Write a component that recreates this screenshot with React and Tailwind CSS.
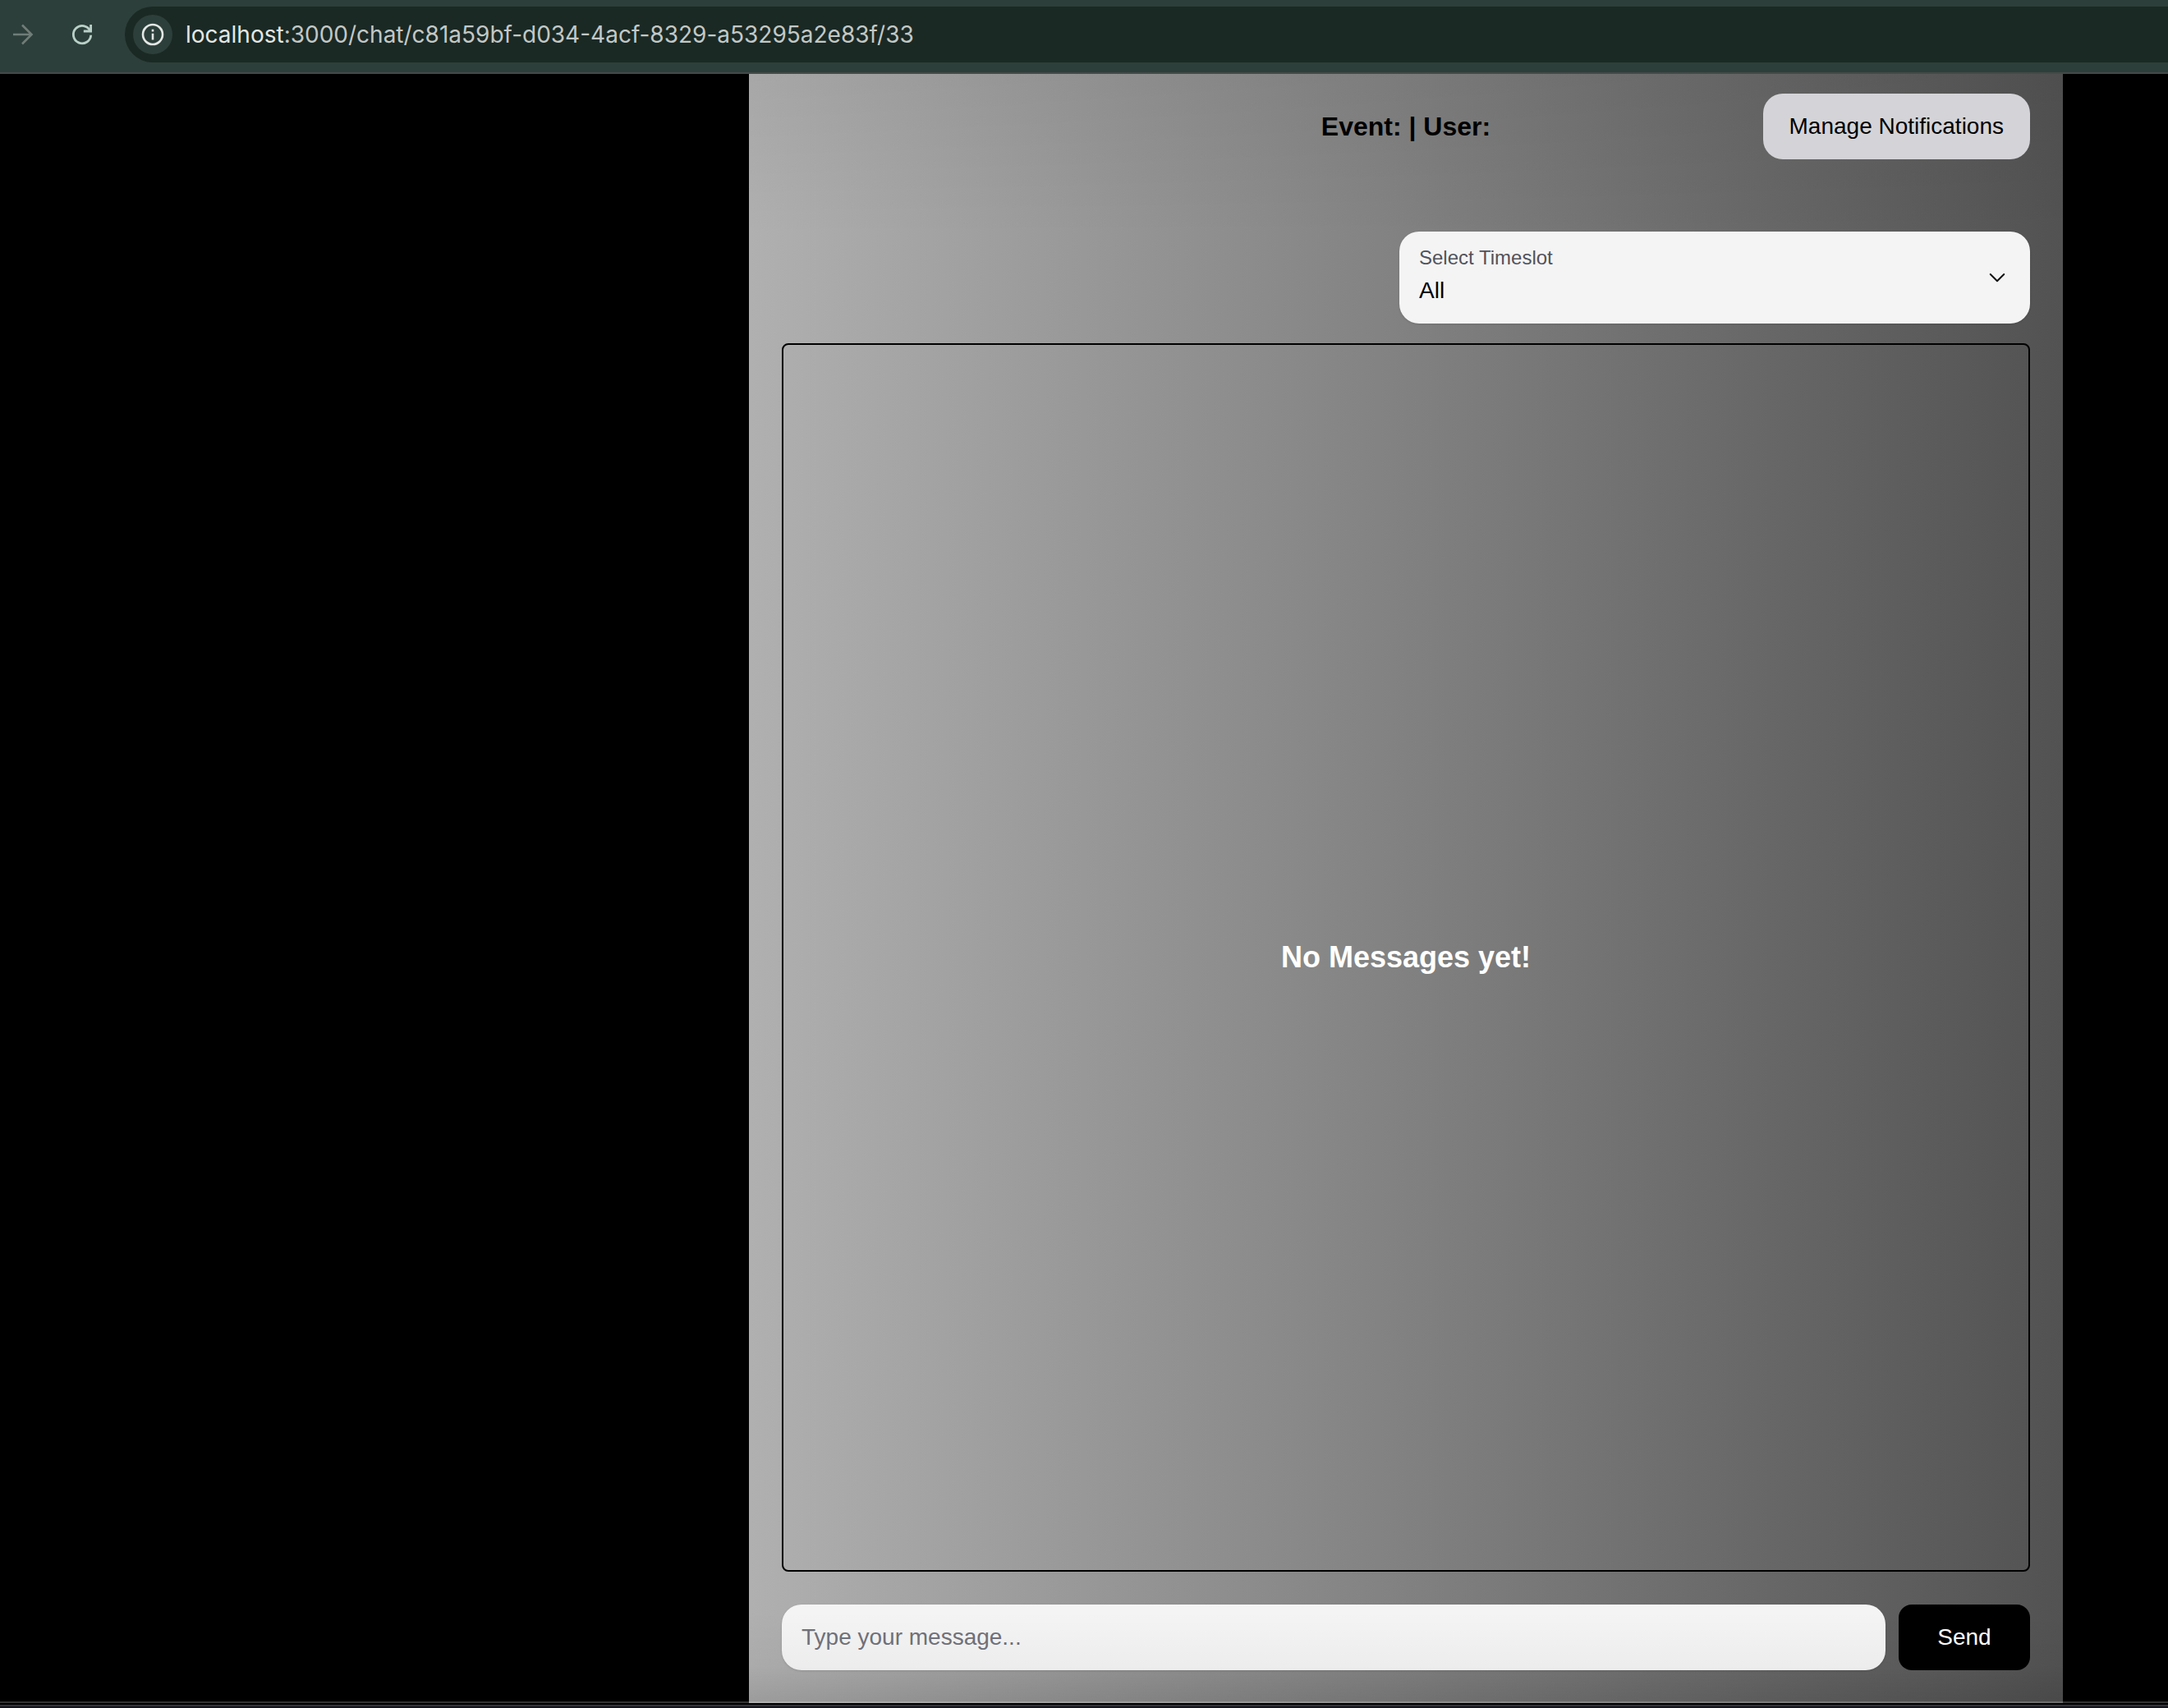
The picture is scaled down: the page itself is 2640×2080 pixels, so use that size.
import React from "react";

const ADDRESS_HOST = "localhost";
const ADDRESS_PATH = ":3000/chat/c81a59bf-d034-4acf-8329-a53295a2e83f/33";

function BrowserBar() {
  return (
    <header className="flex h-[90px] items-center overflow-hidden border-b-2 border-[#444a48] bg-[#2d3f3a] pb-1 font-['Inter',sans-serif]">
      <button type="button" aria-label="Forward" className="ml-3 text-[#6f7d78]">
        <svg width="32" height="32" viewBox="0 0 32 32" fill="none" stroke="currentColor" strokeWidth="2.6">
          <path d="M4 16H26.500M15 4.500L26.500 16L15 27.500" />
        </svg>
      </button>
      <button type="button" aria-label="Reload" className="ml-10 text-[#b9d0c8]">
        <svg width="32" height="32" viewBox="0 0 32 32" fill="none" stroke="currentColor" strokeWidth="2.8">
          <path d="M26.700 16.700A10.700 10.700 0 1 1 25.800 11.800" />
          <path d="M26.600 4V12H17.800" />
        </svg>
      </button>
      <div className="ml-9 flex h-[68px] flex-1 items-center rounded-l-full bg-[#1a2924] pl-[10px]">
        <button type="button" aria-label="Site information" className="flex size-12 items-center justify-center rounded-full bg-[#2d3f3a] text-[#e3e7e5]">
          <svg width="28" height="28" viewBox="0 0 28 28" fill="none" stroke="currentColor" strokeWidth="2.6">
            <circle cx="14" cy="14" r="12" />
            <path d="M14 12.700V20.500M14 7.800V10.600" />
          </svg>
        </button>
        <div className="relative ml-4 flex-1 text-[28px] leading-9 whitespace-nowrap">
          <span aria-hidden="true" className="text-[#c3c8c6]">
            <span className="text-[#e3e7e5]">{ADDRESS_HOST}</span>
            {ADDRESS_PATH}
          </span>
          <input
            aria-label="Address"
            className="absolute inset-0 w-full bg-transparent text-transparent outline-none"
            defaultValue={ADDRESS_HOST + ADDRESS_PATH}
          />
        </div>
      </div>
    </header>
  );
}

function TimeslotSelect() {
  return (
    <div className="relative w-full max-w-3xl">
      <label htmlFor="timeslot" className="pointer-events-none absolute top-4 left-6 text-2xl text-[#52525b]">
        Select Timeslot
      </label>
      <select
        id="timeslot"
        className="block h-28 w-full appearance-none rounded-3xl bg-[#f4f4f4] px-6 pt-8 text-[28px] text-black shadow-sm"
      >
        <option>All</option>
      </select>
      <svg className="pointer-events-none absolute top-10 right-6" width="32" height="32" viewBox="0 0 24 24" fill="none" stroke="#111" strokeWidth="1.5" strokeLinecap="round" strokeLinejoin="round">
        <path d="m5.800 9 6.200 6.200 6.200-6.200" />
      </svg>
    </div>
  );
}

export default function App() {
  return (
    <div className="flex min-h-screen flex-col bg-black font-['Liberation_Sans',Arial,sans-serif]">
      <BrowserBar />
      <main className="relative mr-32 ml-[912px] flex flex-1 flex-col bg-[linear-gradient(to_bottom,rgba(0,0,0,0.05),transparent_200px),linear-gradient(to_right,#b0b0b0,#525252)] px-10 pt-6 pb-10">
        <div className="grid grid-cols-[1fr_auto_1fr] items-center">
          <h1 className="col-start-2 text-[32px] leading-10 font-bold text-black">Event: | User:</h1>
          <button type="button" className="h-20 justify-self-end rounded-3xl bg-[#d4d4d8] px-8 text-[28px] text-black">
            Manage Notifications
          </button>
        </div>
        <div className="mt-22 flex justify-end">
          <TimeslotSelect />
        </div>
        <section className="mt-6 flex flex-1 items-center justify-center rounded-lg border-2 border-black">
          <p className="text-4xl font-bold text-white">No Messages yet!</p>
        </section>
        <form className="mt-10 flex gap-4" onSubmit={(e) => e.preventDefault()}>
          <input
            aria-label="Message"
            placeholder="Type your message..."
            className="h-20 min-w-0 flex-1 rounded-3xl bg-[#f4f4f4] px-6 text-[28px] text-black shadow-sm placeholder:text-[#71717a]"
          />
          <button type="submit" className="h-20 w-40 rounded-2xl bg-black text-[28px] text-white">
            Send
          </button>
        </form>
        <div className="pointer-events-none absolute inset-x-0 bottom-0 h-28 bg-linear-to-b from-transparent via-black/3 via-60% to-black/12" />
      </main>
      <footer className="relative -mt-0.5 h-2 border-t-2 border-white/20 bg-black bg-clip-padding pt-0.5">
        <div className="h-1 border-t-2 border-[#34343f] bg-[#15151c]" />
      </footer>
    </div>
  );
}
